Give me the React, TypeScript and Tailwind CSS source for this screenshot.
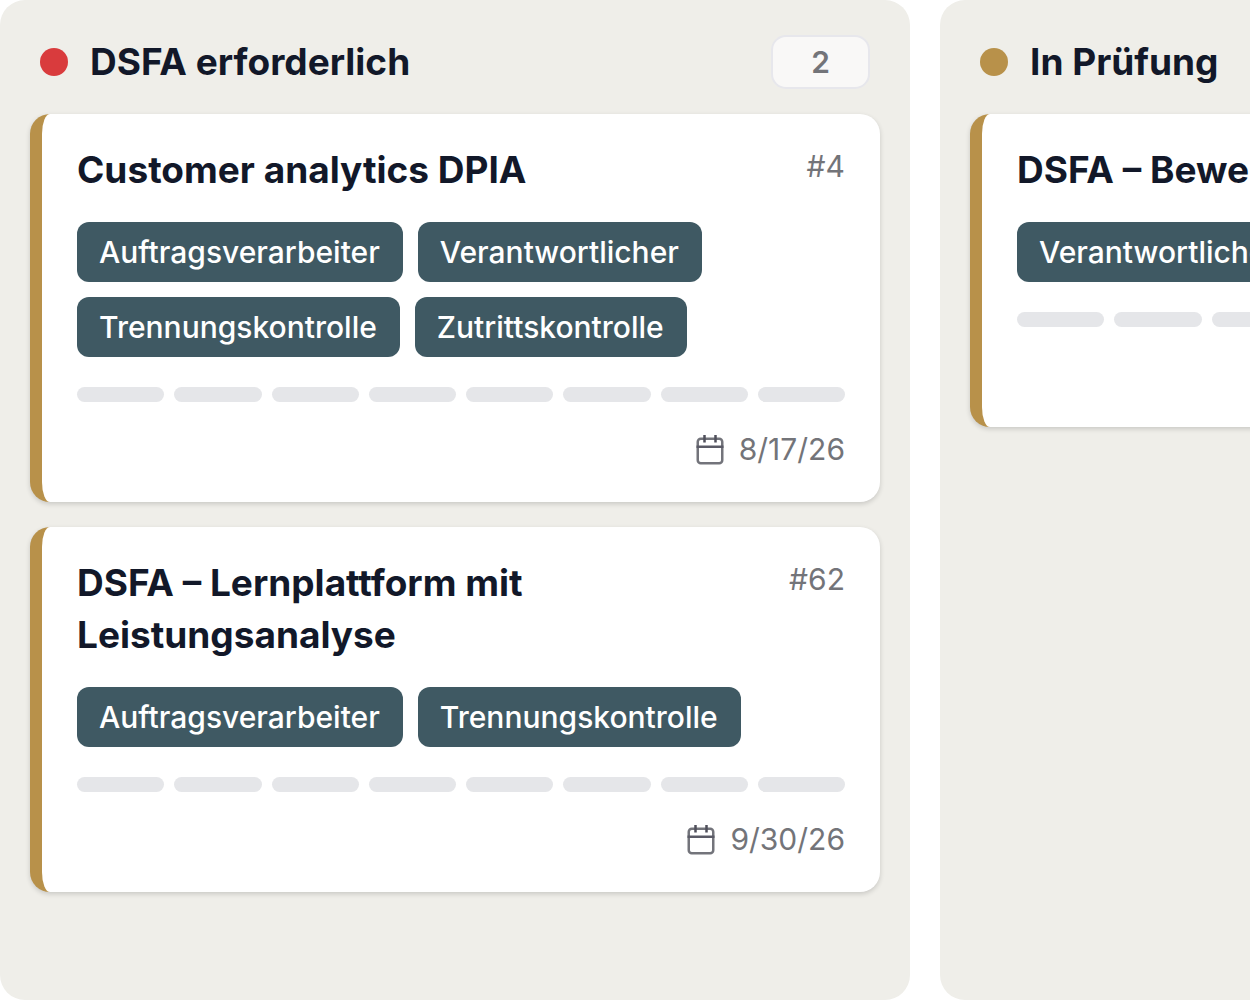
type Card = {
  id: number
  title: string
  tags: string[]
  due: string
}

type Column = {
  name: string
  dot: string
  cards: Card[]
}

const columns: Column[] = [
  {
    name: 'DSFA erforderlich',
    dot: 'bg-[#d93b3d]',
    cards: [
      {
        id: 4,
        title: 'Customer analytics DPIA',
        tags: ['Auftragsverarbeiter', 'Verantwortlicher', 'Trennungskontrolle', 'Zutrittskontrolle'],
        due: '8/17/26',
      },
      {
        id: 62,
        title: 'DSFA – Lernplattform mit Leistungsanalyse',
        tags: ['Auftragsverarbeiter', 'Trennungskontrolle'],
        due: '9/30/26',
      },
    ],
  },
  {
    name: 'In Prüfung',
    dot: 'bg-[#b8914a]',
    cards: [
      {
        id: 61,
        title: 'DSFA – Bewerberportal',
        tags: ['Verantwortlicher'],
        due: '9/15/26',
      },
    ],
  },
]

const STEPS = 8

function CalendarIcon() {
  return (
    <svg viewBox="0 0 30 32" fill="none" className="h-8 w-[30px]" aria-hidden="true">
      <rect x="2.75" y="4.75" width="24.5" height="24.5" rx="3" stroke="#73747b" strokeWidth="2.5" />
      <path d="M1.5 12.75h27" stroke="#5a5a66" strokeWidth="2.5" />
      <path d="M9.5 1v7.5M20.5 1v7.5" stroke="#4f4f5b" strokeWidth="2.5" />
    </svg>
  )
}

function Progress() {
  return (
    <div className="mt-[30px] flex gap-[10px]">
      {Array.from({ length: STEPS }, (_, i) => (
        <span key={i} className="h-[15px] flex-1 rounded-full bg-[#e5e6e9]" />
      ))}
    </div>
  )
}

function CardItem({ card }: { card: Card }) {
  return (
    <article className="rounded-[20px] border-l-12 border-[#b8914a] bg-white px-[35px] py-[30px] shadow-[0_2px_5px_rgba(0,0,0,0.16)]">
      <div className="flex items-start justify-between gap-5">
        <h3 className="max-w-[560px] text-[37px] leading-[52px] font-bold text-[#121829]">{card.title}</h3>
        <span className="text-[30px] leading-[45px] text-[#737479]">#{card.id}</span>
      </div>

      <ul className="mt-[26px] flex flex-wrap gap-[15px]">
        {card.tags.map(tag => (
          <li
            key={tag}
            className="rounded-[12px] bg-[#3f5963] pr-[23px] pl-[22px] text-[30px] leading-[60px] font-medium text-white"
          >
            {tag}
          </li>
        ))}
      </ul>

      <Progress />

      <div className="mt-[25px] flex items-center justify-end gap-[14px] text-[30px] leading-[45px] text-[#737479]">
        <CalendarIcon />
        <time>{card.due}</time>
      </div>
    </article>
  )
}

function BoardColumn({ column }: { column: Column }) {
  return (
    <section className="w-[910px] shrink-0 rounded-[25px] bg-[#efeee9] px-[30px] pt-[35px] pb-[30px]">
      <header className="flex items-center px-[10px]">
        <span className={`size-7 rounded-full ${column.dot}`} />
        <h2 className="ml-[22px] flex-1 text-[37px] leading-[54px] font-bold text-[#121829]">{column.name}</h2>
        <span className="flex h-[54px] w-[99px] items-center justify-center rounded-[15px] border-2 border-[#e7e7ec] bg-[#f9f8f7] text-[30px] font-semibold text-[#737479]">
          {column.cards.length}
        </span>
      </header>

      <div className="mt-[25px] flex flex-col gap-[25px]">
        {column.cards.map(card => (
          <CardItem key={card.id} card={card} />
        ))}
      </div>
    </section>
  )
}

export default function App() {
  return (
    <main className="flex min-h-screen gap-[30px] overflow-hidden bg-white font-['Inter',sans-serif]">
      {columns.map(column => (
        <BoardColumn key={column.name} column={column} />
      ))}
    </main>
  )
}
